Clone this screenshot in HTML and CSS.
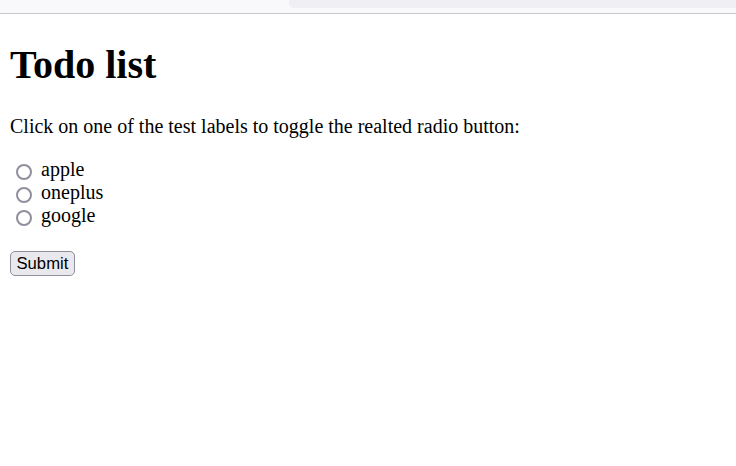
FILE: index.html
```html
<!DOCTYPE html>
<html lang="en">
<head>
<meta charset="utf-8">
<title>Todo list</title>
<link rel="stylesheet" href="styles.css">
</head>
<body>
<div class="chrome"><div class="urlbar"></div></div>
<main class="page">
  <h1 class="title">Todo list</h1>
  <p class="intro">Click on one of the test labels to toggle the realted radio button:</p>
  <form class="choices">
    <div class="row"><input class="radio" type="radio" id="apple" name="brand"> <label for="apple">apple</label></div>
    <div class="row"><input class="radio" type="radio" id="oneplus" name="brand"> <label for="oneplus">oneplus</label></div>
    <div class="row"><input class="radio" type="radio" id="google" name="brand"> <label for="google">google</label></div>
    <div class="actions"><input class="submit" type="submit" value="Submit"></div>
  </form>
</main>
</body>
</html>
```
FILE: styles.css
```css
html, body {
  margin: 0;
  padding: 0;
  background: #ffffff;
}
body {
  font-family: "Liberation Serif", "Times New Roman", serif;
  font-size: 20px;
  color: #000000;
}
.chrome {
  height: 13px;
  background: #f9f9fb;
  border-bottom: 1px solid #c8c8cc;
  display: flex;
  justify-content: flex-end;
}
.urlbar {
  width: 447px;
  height: 8px;
  background: #f0f0f4;
  border-bottom-left-radius: 5px;
}
.page {
  padding: 0 10px;
}
.title {
  font-size: 40px;
  font-weight: bold;
  margin: 26.8px 0;
}
.intro {
  margin: 20px 0;
}
.choices {
  margin: 0;
}
.row {
  height: 23px;
  line-height: 23px;
}
.radio {
  -webkit-appearance: none;
  appearance: none;
  box-sizing: border-box;
  width: 16px;
  height: 16px;
  border: 2px solid #8f8f9d;
  border-radius: 50%;
  background: #ffffff;
  margin: 0 4px 0 6px;
  vertical-align: -4px;
}
.actions {
  margin-top: 24px;
}
.submit {
  font-family: "Liberation Sans", Arial, sans-serif;
  font-size: 16.67px;
  color: #000000;
  background: #e9e9ed;
  border: 1px solid #8f8f9d;
  border-radius: 5px;
  padding: 1px 5.5px;
  line-height: 21px;
  margin: 0;
}
```
